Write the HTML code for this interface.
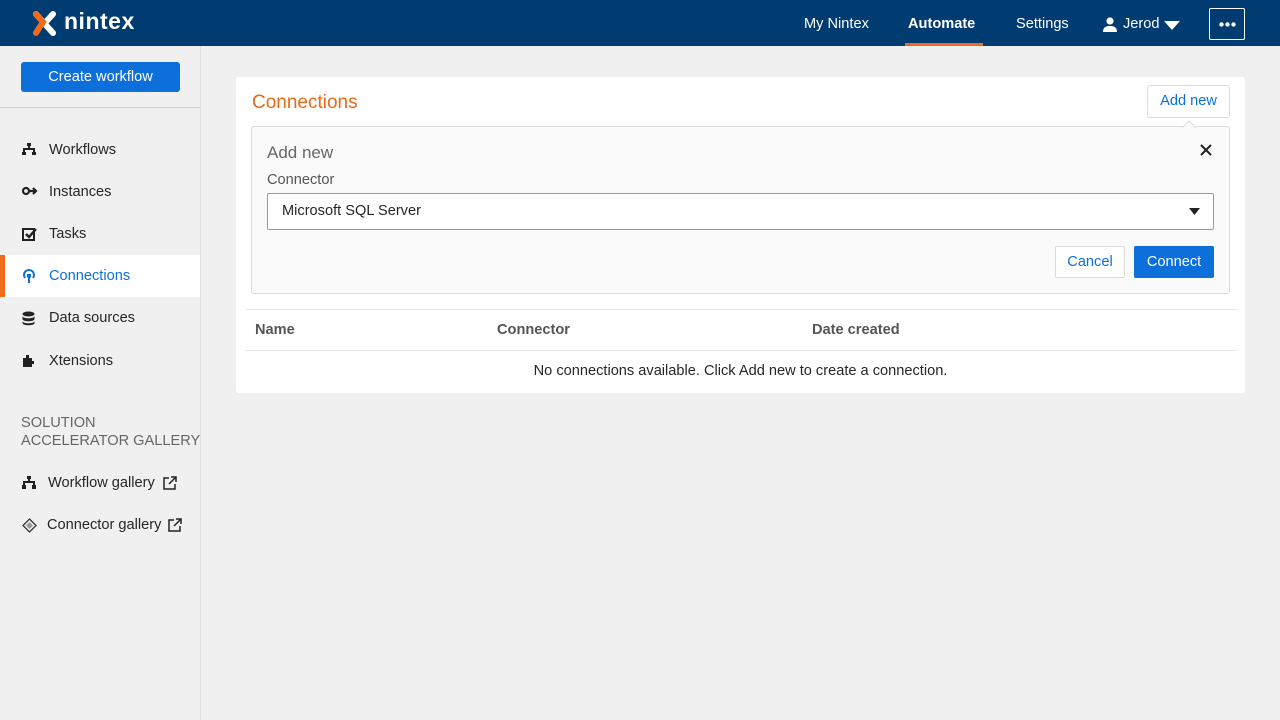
<!DOCTYPE html>
<html><head><style>
*{box-sizing:border-box;margin:0;padding:0}
body{width:1280px;height:720px;background:#f0f0f0;font-family:"Liberation Sans",sans-serif;color:#262626;position:relative;overflow:hidden;font-size:14.6px}
.hdr{position:absolute;left:0;top:0;width:1280px;height:46px;background:#003b71;color:#fff}
.side{position:absolute;left:0;top:46px;width:201px;height:674px;background:#f0f0f0;border-right:1px solid #e0e0e0}
.btn{position:absolute;left:21px;top:62px;width:159px;height:30px;background:#0d6fd9;color:#fff;border-radius:3px;text-align:center;line-height:30px}
.nav{position:absolute;left:0;width:200px;height:42px;line-height:42px}
.nav svg{position:absolute;left:22px;top:14px}
.nav span{position:absolute;left:49px}
.card{position:absolute;left:236px;top:77px;width:1009px;height:316px;background:#fff;border-radius:3px}
</style></head><body>
<div class="hdr">
<svg style="position:absolute;left:32px;top:11px" width="25" height="25" viewBox="0 0 25 25"><path d="M4 3L21 22" stroke="#fff" stroke-width="6" stroke-linecap="round"/><path d="M21 3L12 13" stroke="#fff" stroke-width="6" stroke-linecap="round"/><path d="M4 3L11 11L4 22" stroke="#f26b1d" stroke-width="6" stroke-linecap="round" fill="none"/></svg>
<div style="position:absolute;left:64px;top:8px;font-size:23px;font-weight:bold;letter-spacing:0.5px">nintex</div>
<div style="position:absolute;left:804px;top:16px">My Nintex</div>
<div style="position:absolute;left:908px;top:16px;font-weight:bold">Automate</div>
<div style="position:absolute;left:905px;top:43px;width:78px;height:3px;background:#f26b1d"></div>
<div style="position:absolute;left:1016px;top:16px">Settings</div>
<svg style="position:absolute;left:1103px;top:17px" width="14" height="15" viewBox="0 0 14 15"><circle cx="7" cy="4" r="3.6" fill="#fff"/><path d="M0 15c0-5 3-6 7-6s7 1 7 6z" fill="#fff"/></svg>
<div style="position:absolute;left:1123px;top:16px">Jerod</div>
<svg style="position:absolute;left:1164px;top:21px" width="16" height="9"><path d="M0 0h16L8 9z" fill="#fff"/></svg>
<div style="position:absolute;left:1209px;top:8px;width:36px;height:32px;border:1px solid #fff;border-radius:2px"><svg style="position:absolute;left:9px;top:13px" width="17" height="5"><circle cx="2.5" cy="2.5" r="2.2" fill="#fff"/><circle cx="8.5" cy="2.5" r="2.2" fill="#fff"/><circle cx="14.5" cy="2.5" r="2.2" fill="#fff"/></svg></div>
</div>
<div class="side">
<div style="position:absolute;left:0;top:61px;width:200px;height:1px;background:#d0d0d0"></div>
</div>
<div class="btn">Create workflow</div>
<div class="nav" style="top:129px"><svg width="14" height="12"><path d="M5 0h4v3H5zM1 5h12v2H1zM1 7h2v2H1zM11 7h2v2h-2zM0 9h4v3H0zM10 9h4v3h-4zM6 3h2v2H6z" fill="#222"/></svg><span>Workflows</span></div>
<div class="nav" style="top:171px"><svg width="16" height="12"><circle cx="4" cy="6" r="3" fill="none" stroke="#222" stroke-width="2.2"/><path d="M7 6h7M11 3l3 3-3 3" stroke="#222" stroke-width="2.2" fill="none"/></svg><span>Instances</span></div>
<div class="nav" style="top:213px"><svg width="15" height="14"><rect x="1" y="2" width="11" height="11" fill="none" stroke="#222" stroke-width="2"/><path d="M4 7l3 3 7-8" stroke="#222" stroke-width="2.4" fill="none"/></svg><span>Tasks</span></div>
<div class="nav" style="top:255px;background:#fff;color:#0d6fd9"><div style="position:absolute;left:0;top:0;width:5px;height:42px;background:#f26b1d"></div><svg width="14" height="14"><path d="M3 9a5 5 0 1 1 8 0" fill="none" stroke="#0d6fd9" stroke-width="2"/><path d="M5 5h4v3l-1 1v5H6V9L5 8z" fill="#0d6fd9"/></svg><span>Connections</span></div>
<div class="nav" style="top:297px"><svg width="13" height="15"><ellipse cx="6.5" cy="3" rx="6" ry="2.5" fill="#222"/><path d="M.5 5c0 3 12 3 12 0v3c0 3-12 3-12 0zM.5 10c0 3 12 3 12 0v2c0 3-12 3-12 0z" fill="#222"/></svg><span>Data sources</span></div>
<div class="nav" style="top:340px"><svg width="14" height="13"><path d="M1 4h3V1h3v3h3v3h2v3h-2v3H1z" fill="#222"/></svg><span>Xtensions</span></div>
<div style="position:absolute;left:21px;top:414px;color:#666;line-height:18px">SOLUTION<br>ACCELERATOR GALLERY</div>
<div class="nav" style="top:462px"><svg width="14" height="13"><path d="M5 0h4v3H5zM6 3h2v2H6zM1 5h12v2H1zM1 7h2v2H1zM11 7h2v2h-2zM0 9h4v4H0zM10 9h4v4h-4z" fill="#222"/></svg><span style="left:48px">Workflow gallery</span><svg style="left:163px;top:14px" width="14" height="14"><path d="M6 2H1v11h11V8M8 1h5v5M13 1L6 8" fill="none" stroke="#222" stroke-width="1.5"/></svg></div>
<div class="nav" style="top:504px"><svg width="15" height="15"><path d="M7.5 1l6.5 6.5-6.5 6.5L1 7.5z" fill="none" stroke="#333" stroke-width="1.3"/><path d="M7.5 4l3.5 3.5-3.5 3.5L4 7.5z" fill="#999"/></svg><span style="left:47px">Connector gallery</span><svg style="left:168px;top:14px" width="14" height="14"><path d="M6 2H1v11h11V8M8 1h5v5M13 1L6 8" fill="none" stroke="#222" stroke-width="1.5"/></svg></div>

<div class="card">
<div style="position:absolute;left:16px;top:15px;font-size:19px;color:#e66b16">Connections</div>
<div style="position:absolute;left:911px;top:8px;width:83px;height:33px;border:1px solid #dcdcdc;border-radius:3px;color:#0d6fd9;text-align:center;line-height:31px">Add new</div>
<div style="position:absolute;left:15px;top:49px;width:979px;height:168px;background:#fafafa;border:1px solid #dcdcdc;border-radius:3px">
<svg style="position:absolute;left:930px;top:-7px" width="14" height="8"><path d="M0 8L7 1l7 7" fill="#fafafa" stroke="#dcdcdc"/></svg>
<div style="position:absolute;left:15px;top:16px;font-size:17px;color:#666">Add new</div>
<svg style="position:absolute;left:948px;top:17px" width="12" height="12"><path d="M1 1l10 10M11 1L1 11" stroke="#222" stroke-width="2"/></svg>
<div style="position:absolute;left:15px;top:45px;color:#555">Connector</div>
<div style="position:absolute;left:15px;top:66px;width:947px;height:37px;background:#fff;border:1px solid #999;border-radius:2px;line-height:35px;padding-left:14px">Microsoft SQL Server
<svg style="position:absolute;right:13px;top:14px" width="11" height="7"><path d="M0 0h11L5.5 7z" fill="#222"/></svg></div>
<div style="position:absolute;left:803px;top:119px;width:70px;height:32px;background:#fff;border:1px solid #dcdcdc;border-radius:2px;color:#0d6fd9;text-align:center;line-height:30px">Cancel</div>
<div style="position:absolute;left:882px;top:119px;width:80px;height:32px;background:#0d6fd9;border-radius:2px;color:#fff;text-align:center;line-height:32px">Connect</div>
</div>
<div style="position:absolute;left:9px;top:232px;width:992px;height:1px;background:#e6e6e6"></div>
<div style="position:absolute;left:19px;top:245px;font-weight:bold;color:#555">Name</div>
<div style="position:absolute;left:261px;top:245px;font-weight:bold;color:#555">Connector</div>
<div style="position:absolute;left:576px;top:245px;font-weight:bold;color:#555">Date created</div>
<div style="position:absolute;left:9px;top:273px;width:992px;height:1px;background:#e6e6e6"></div>
<div style="position:absolute;left:0;top:286px;width:1009px;text-align:center">No connections available. Click Add new to create a connection.</div>
</div>
</body></html>
